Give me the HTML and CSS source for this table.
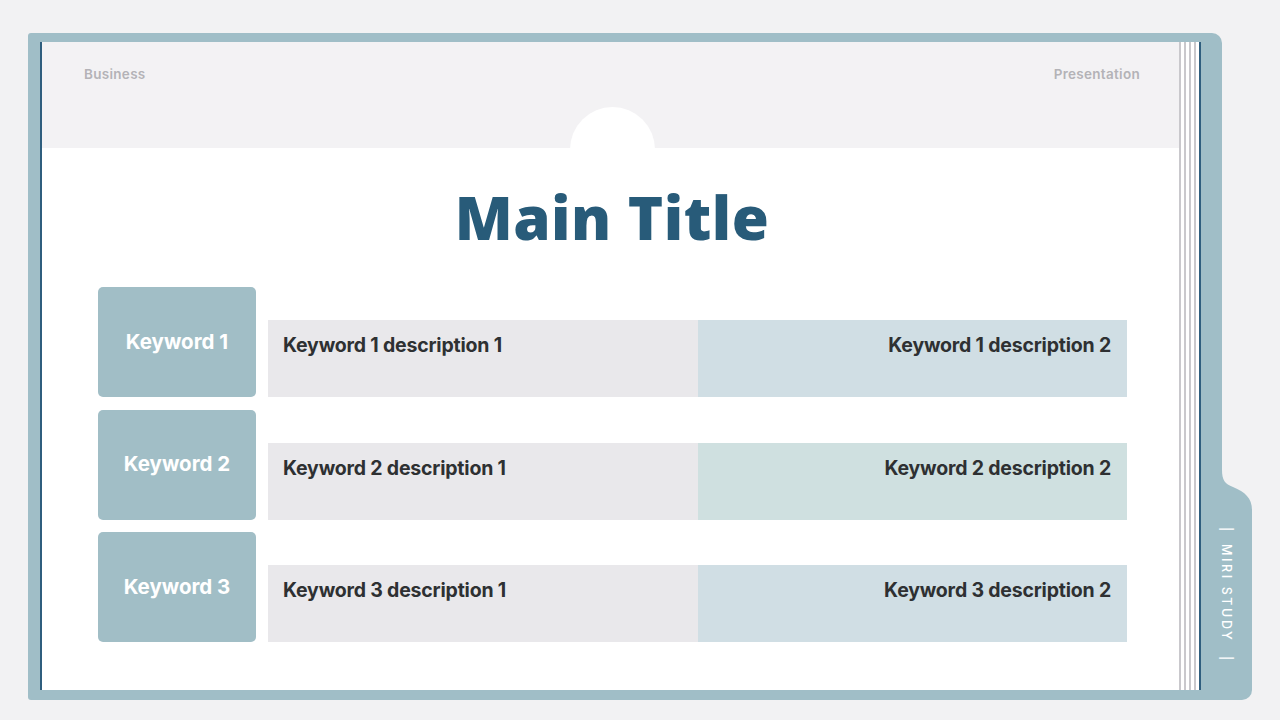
FILE: index.html
```html
<!DOCTYPE html>
<html lang="en">
<head>
<meta charset="utf-8">
<title>Main Title</title>
<link rel="stylesheet" href="styles.css">
</head>
<body>
<div class="stage">
  <div class="frame">
    <div class="board">
      <div class="edge-line"></div>
      <div class="page">
        <div class="page-head">
          <span class="head-label">Business</span>
          <span class="head-label">Presentation</span>
        </div>
        <div class="notch"></div>
        <h1 class="title">Main Title</h1>
        <div class="rows">
          <div class="row">
            <div class="keyword">Keyword 1</div>
            <div class="desc">
              <div class="desc-cell desc-left">Keyword 1 description 1</div>
              <div class="desc-cell desc-right">Keyword 1 description 2</div>
            </div>
          </div>
          <div class="row">
            <div class="keyword">Keyword 2</div>
            <div class="desc">
              <div class="desc-cell desc-left">Keyword 2 description 1</div>
              <div class="desc-cell desc-right desc-right-alt">Keyword 2 description 2</div>
            </div>
          </div>
          <div class="row">
            <div class="keyword">Keyword 3</div>
            <div class="desc">
              <div class="desc-cell desc-left">Keyword 3 description 1</div>
              <div class="desc-cell desc-right">Keyword 3 description 2</div>
            </div>
          </div>
        </div>
      </div>
      <div class="stripes"></div>
      <div class="edge-line"></div>
    </div>
    <div class="spine">
      <div class="spine-top"></div>
      <svg class="spine-curve" width="51" height="40" viewBox="0 0 51 40" aria-hidden="true">
        <path d="M0 0 H21 C21 10 24 14 32 17 C44 22 51 28 51 40 H0 Z" fill="#a0bec7"/>
      </svg>
      <div class="spine-tab">
        <div class="tab-label">
          <span class="tab-bar">|</span>
          <span class="tab-text">MIRI STUDY</span>
          <span class="tab-bar">|</span>
        </div>
      </div>
    </div>
  </div>
</div>
</body>
</html>
```

FILE: styles.css
```css
* {
  box-sizing: border-box;
}

html, body {
  margin: 0;
  padding: 0;
}

body {
  background: #f2f2f3;
  font-family: "Inter", "Noto Sans", "Liberation Sans", sans-serif;
  width: 1280px;
  height: 720px;
  overflow: hidden;
}

.stage {
  padding: 33px 0 0 28px;
}

.frame {
  display: flex;
  height: 667px;
}

.board {
  display: flex;
  width: 1173px;
  height: 100%;
  background: #a0bec7;
  padding: 9px 0 10px 12px;
  border-radius: 3px 0 0 3px;
}

.edge-line {
  width: 2px;
  background: #2f5e7e;
  flex: none;
}

.page {
  position: relative;
  width: 1137px;
  flex: none;
  background: #ffffff;
  display: flex;
  flex-direction: column;
}

.page-head {
  height: 106px;
  background: #f3f2f4;
  display: flex;
  justify-content: space-between;
  padding: 23px 39px 0 42px;
}

.head-label {
  font-size: 13.5px;
  font-weight: 600;
  color: #b4b3b7;
  letter-spacing: 0.3px;
  line-height: 18px;
}

.notch {
  position: absolute;
  left: 528px;
  top: 65px;
  width: 85px;
  height: 85px;
  border-radius: 50%;
  background: #ffffff;
}

.title {
  position: relative;
  margin: 33px 0 0 3px;
  text-align: center;
  font-family: "Open Sans", "Noto Sans", sans-serif;
  font-weight: 800;
  font-size: 60px;
  line-height: 72px;
  letter-spacing: 0.5px;
  color: #285b79;
}

.rows {
  margin-top: 34px;
  padding: 0 52px 0 56px;
  display: flex;
  flex-direction: column;
  gap: 12.5px;
}

.row {
  display: flex;
  align-items: flex-end;
  gap: 12px;
}

.keyword {
  width: 158px;
  height: 110px;
  flex: none;
  border-radius: 5px;
  background: #a1bec6;
  color: #ffffff;
  font-size: 20.5px;
  font-weight: 700;
  display: flex;
  align-items: center;
  justify-content: center;
  padding-bottom: 2px;
}

.desc {
  flex: 1;
  height: 77px;
  display: flex;
}

.desc-cell {
  flex: 1;
  padding: 13px 16px 0 15px;
  font-size: 19.5px;
  font-weight: 700;
  letter-spacing: -0.2px;
  color: #2e3032;
}

.desc-left {
  background: #e9e8eb;
}

.desc-right {
  background: #d0dee4;
  text-align: right;
}

.desc-right-alt {
  background: #cfe0e0;
}

.stripes {
  width: 20px;
  flex: none;
  background: repeating-linear-gradient(to right, #c9c8cc 0 2px, #ffffff 2px 5px);
}

.spine {
  width: 51px;
  display: flex;
  flex-direction: column;
}

.spine-top {
  flex: 1;
  width: 21px;
  background: #a0bec7;
  border-top-right-radius: 10px;
}

.spine-curve {
  display: block;
  flex: none;
}

.spine-tab {
  height: 190px;
  background: #a0bec7;
  border-bottom-right-radius: 10px;
  display: flex;
  justify-content: center;
  padding: 17px 0 0 0;
}

.tab-label {
  writing-mode: vertical-rl;
  display: flex;
  align-items: center;
  gap: 13px;
  color: #ffffff;
  font-size: 12.5px;
  font-weight: 500;
  line-height: 14px;
  margin-right: 2px;
}

.tab-text {
  letter-spacing: 2.6px;
}
```
